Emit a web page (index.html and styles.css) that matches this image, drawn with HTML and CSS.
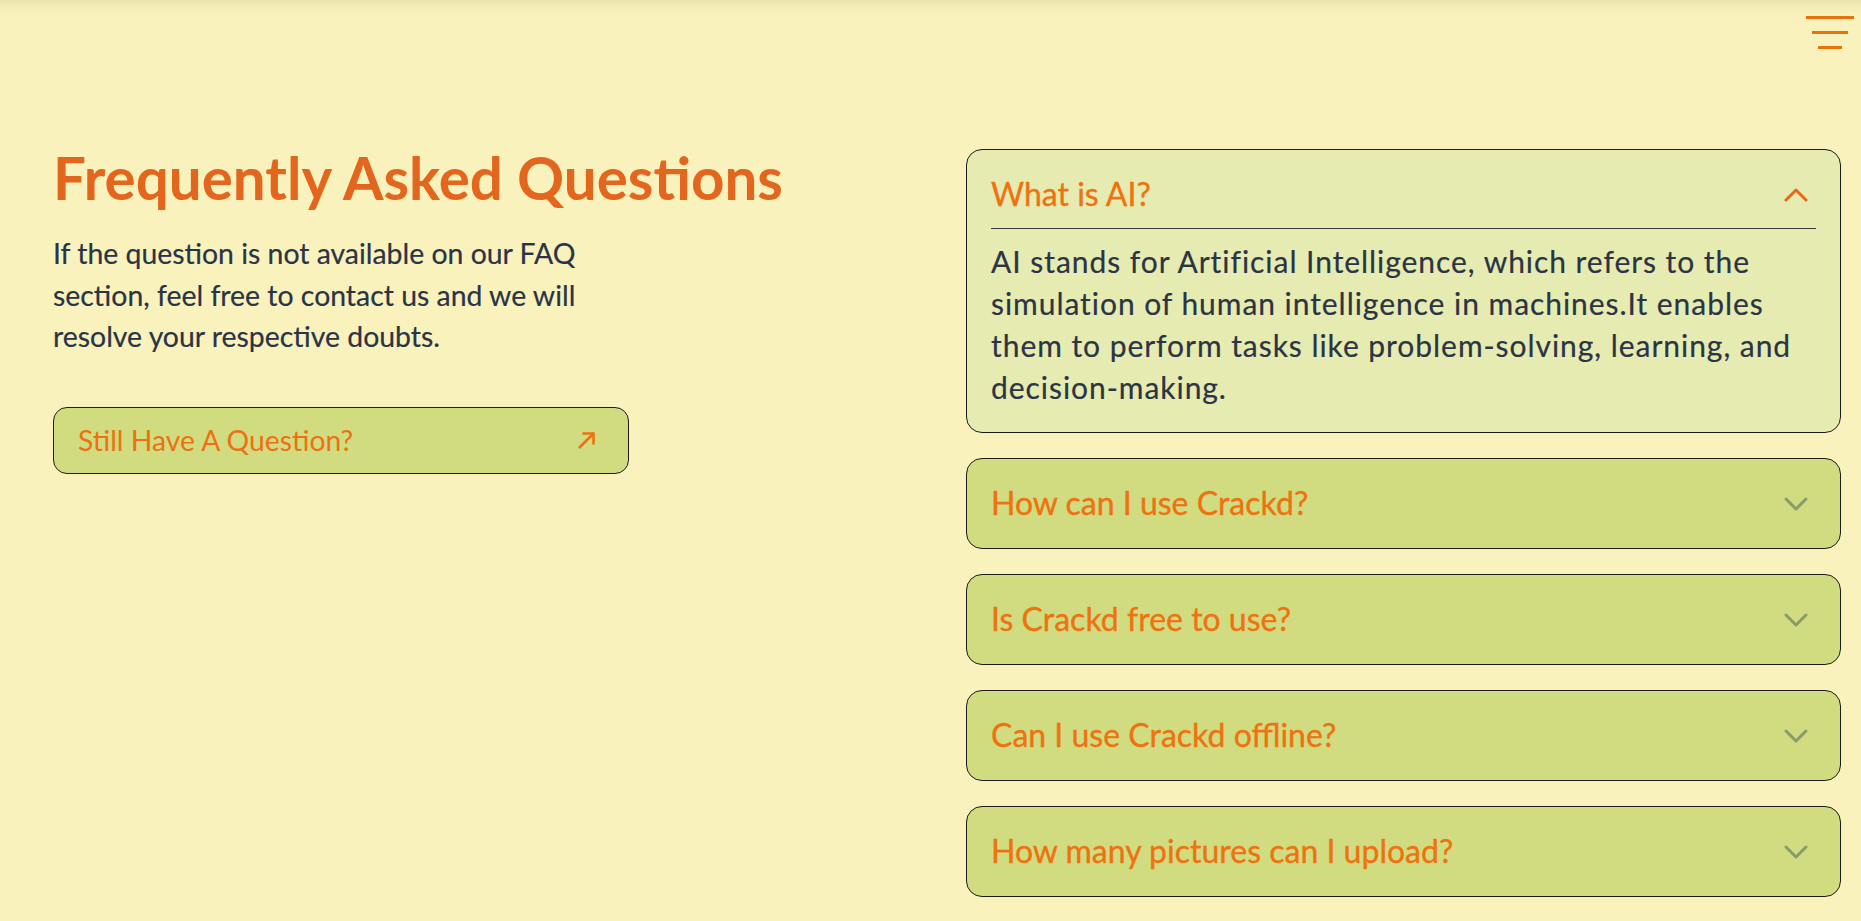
FILE: index.html
```html
<!DOCTYPE html>
<html lang="en">
<head>
<meta charset="utf-8">
<title>FAQ</title>
<link rel="stylesheet" href="styles.css">
</head>
<body>
<header class="topbar">
  <button class="menu" aria-label="Menu">
    <span class="menu-line l1"></span>
    <span class="menu-line l2"></span>
    <span class="menu-line l3"></span>
  </button>
</header>
<main class="faq">
  <section class="faq-intro">
    <h1 class="faq-title">Frequently Asked Questions</h1>
    <p class="faq-text">If the question is not available on our FAQ section, feel free to contact us and we will resolve your respective doubts.</p>
    <a class="ask-btn" href="#">
      <span>Still Have A Question?</span>
      <svg class="ask-arrow" width="19" height="19" viewBox="0 0 19 19" fill="none" stroke="currentColor" stroke-width="2.6">
        <path d="M2 17 L16.5 2.5"/>
        <path d="M5.5 2.5 H16.5 V13.5"/>
      </svg>
    </a>
  </section>
  <section class="faq-list">
    <div class="card open">
      <div class="card-head">
        <span class="q">What is AI?</span>
        <svg class="chev up" width="24" height="14" viewBox="0 0 24 14" fill="none" stroke="currentColor" stroke-width="3" stroke-linecap="round" stroke-linejoin="round"><path d="M2 12 L12 2 L22 12"/></svg>
      </div>
      <div class="card-body">AI stands for Artificial Intelligence, which refers to the simulation of human intelligence in machines.It enables them to perform tasks like problem-solving, learning, and decision-making.</div>
    </div>
    <div class="card">
      <div class="card-head">
        <span class="q">How can I use Crackd?</span>
        <svg class="chev" width="24" height="14" viewBox="0 0 24 14" fill="none" stroke="currentColor" stroke-width="3" stroke-linecap="round" stroke-linejoin="round"><path d="M2 2 L12 12 L22 2"/></svg>
      </div>
    </div>
    <div class="card">
      <div class="card-head">
        <span class="q">Is Crackd free to use?</span>
        <svg class="chev" width="24" height="14" viewBox="0 0 24 14" fill="none" stroke="currentColor" stroke-width="3" stroke-linecap="round" stroke-linejoin="round"><path d="M2 2 L12 12 L22 2"/></svg>
      </div>
    </div>
    <div class="card">
      <div class="card-head">
        <span class="q">Can I use Crackd offline?</span>
        <svg class="chev" width="24" height="14" viewBox="0 0 24 14" fill="none" stroke="currentColor" stroke-width="3" stroke-linecap="round" stroke-linejoin="round"><path d="M2 2 L12 12 L22 2"/></svg>
      </div>
    </div>
    <div class="card">
      <div class="card-head">
        <span class="q">How many pictures can I upload?</span>
        <svg class="chev" width="24" height="14" viewBox="0 0 24 14" fill="none" stroke="currentColor" stroke-width="3" stroke-linecap="round" stroke-linejoin="round"><path d="M2 2 L12 12 L22 2"/></svg>
      </div>
    </div>
  </section>
</main>
</body>
</html>
```
FILE: styles.css
```css
* { box-sizing: border-box; }
html, body { margin: 0; padding: 0; }
body {
  background: #f9f2bd;
  font-family: "Lato", "Open Sans", sans-serif;
  color: #2d3748;
  height: 921px;
  overflow: hidden;
}
.topbar {
  height: 60px;
  display: flex;
  justify-content: flex-end;
  padding-right: 7px;
  background: linear-gradient(to bottom, #ebe3ae 0, #f3ecb7 6px, #f9f2bd 14px);
}
.menu {
  background: none;
  border: 0;
  padding: 16px 0 0;
  width: 48px;
  display: flex;
  flex-direction: column;
  align-items: center;
  gap: 12px;
  cursor: pointer;
}
.menu-line { display: block; height: 3px; background: #e8730c; }
.l1 { width: 48px; }
.l2 { width: 36px; }
.l3 { width: 24px; }

.faq {
  display: flex;
  justify-content: space-between;
  padding: 80px 20px 0 53px;
}
.faq-intro { width: 740px; }
.faq-title {
  margin: 2px 0 0;
  font-size: 58.3px;
  line-height: 70px;
  font-weight: 700;
  color: #e3661f;
  white-space: nowrap;
}
.faq-text {
  margin: 21px 0 0;
  width: 560px;
  font-size: 28.4px;
  line-height: 41.6px;
  color: #2b3445;
  -webkit-text-stroke: 0.2px #2b3445;
}
.ask-btn {
  margin-top: 49px;
  width: 576px;
  height: 67px;
  display: flex;
  align-items: center;
  justify-content: space-between;
  padding: 0 32px 0 24px;
  background: #d1dc80;
  border: 1px solid #1c1c1c;
  border-radius: 14px;
  color: #ec7211;
  font-size: 28.3px;
  line-height: 34px;
  text-decoration: none;
}
.ask-arrow { display: block; color: #ec7211; }

.faq-list {
  width: 875px;
  margin-top: 9px;
  display: flex;
  flex-direction: column;
  gap: 25px;
}
.card {
  background: #d1dc80;
  border: 1px solid #1c1c1c;
  border-radius: 16px;
  padding: 24px 24px 26px;
}
.card.open { background: #e6ebb1; padding-bottom: 24px; }
.card-head {
  display: flex;
  align-items: center;
  justify-content: space-between;
  padding-right: 8px;
  height: 39px;
}
.q {
  font-size: 32px;
  line-height: 39px;
  color: #ee7310;
  -webkit-text-stroke: 0.35px #ee7310;
}
.chev { display: block; color: #8a9b6b; margin-top: 2px; }
.chev.up { color: #e8681a; }
.card.open .card-head {
  height: 55px;
  align-items: flex-start;
  border-bottom: 1px solid #3a3a3a;
}
.card.open .chev.up { margin-top: 14px; }
.card-body {
  margin-top: 11px;
  font-size: 30px;
  line-height: 42px;
  letter-spacing: 0.95px;
  color: #2b3445;
  -webkit-text-stroke: 0.2px #2b3445;
  margin-right: -6px;
}
```
